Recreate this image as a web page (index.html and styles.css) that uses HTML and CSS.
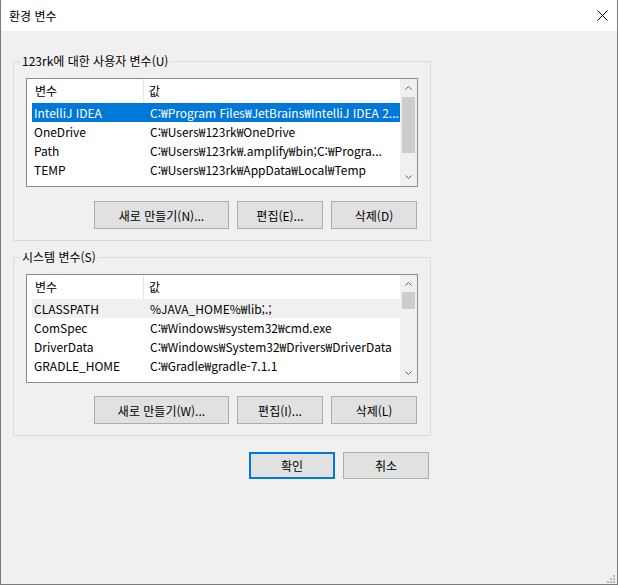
FILE: index.html
```html
<!DOCTYPE html>
<html lang="ko">
<head>
<meta charset="UTF-8">
<title>환경 변수</title>
<link rel="stylesheet" href="styles.css">
</head>
<body>

<div class="window">
    <!-- Title bar -->
    <div class="titlebar">
        <span>환경 변수</span>
        <svg class="close" width="11" height="11" viewBox="0 0 11 11">
            <path d="M0.5 0.5 L10.5 10.5 M10.5 0.5 L0.5 10.5" stroke="#000" stroke-width="1" fill="none"/>
        </svg>
    </div>

    <div class="content">
        <!-- User variables -->
        <fieldset class="group">
            <legend>123rk에 대한 사용자 변수(U)</legend>
            <div class="list">
                <div class="list-body">
                    <div class="list-head">
                        <div class="col-name">변수</div>
                        <div class="col-value">값</div>
                    </div>
                    <div class="rows">
                        <div class="row selected"><span class="name">IntelliJ IDEA</span><span>C:₩Program Files₩JetBrains₩IntelliJ IDEA 2...</span></div>
                        <div class="row"><span class="name">OneDrive</span><span>C:₩Users₩123rk₩OneDrive</span></div>
                        <div class="row"><span class="name">Path</span><span>C:₩Users₩123rk₩.amplify₩bin;C:₩Progra...</span></div>
                        <div class="row"><span class="name">TEMP</span><span>C:₩Users₩123rk₩AppData₩Local₩Temp</span></div>
                    </div>
                </div>
                <div class="scrollbar">
                    <div class="scroll-btn">
                        <svg width="7" height="5" viewBox="0 0 7 5"><polyline points="0.5,4.5 3.5,1.5 6.5,4.5" fill="none" stroke="#606060"/></svg>
                    </div>
                    <div class="track"><div class="thumb" style="margin-top:1px;height:56px"></div></div>
                    <div class="scroll-btn">
                        <svg width="7" height="5" viewBox="0 0 7 5"><polyline points="0.5,0.5 3.5,3.5 6.5,0.5" fill="none" stroke="#606060"/></svg>
                    </div>
                </div>
            </div>
            <div class="list-buttons">
                <button class="btn btn-wide">새로 만들기(N)...</button>
                <button class="btn">편집(E)...</button>
                <button class="btn">삭제(D)</button>
            </div>
        </fieldset>

        <!-- System variables -->
        <fieldset class="group group-system">
            <legend>시스템 변수(S)</legend>
            <div class="list">
                <div class="list-body">
                    <div class="list-head">
                        <div class="col-name">변수</div>
                        <div class="col-value">값</div>
                    </div>
                    <div class="rows">
                        <div class="row inactive"><span class="name">CLASSPATH</span><span>%JAVA_HOME%₩lib;.;</span></div>
                        <div class="row"><span class="name">ComSpec</span><span>C:₩Windows₩system32₩cmd.exe</span></div>
                        <div class="row"><span class="name">DriverData</span><span>C:₩Windows₩System32₩Drivers₩DriverData</span></div>
                        <div class="row"><span class="name">GRADLE_HOME</span><span>C:₩Gradle₩gradle-7.1.1</span></div>
                    </div>
                </div>
                <div class="scrollbar">
                    <div class="scroll-btn">
                        <svg width="7" height="5" viewBox="0 0 7 5"><polyline points="0.5,4.5 3.5,1.5 6.5,4.5" fill="none" stroke="#606060"/></svg>
                    </div>
                    <div class="track"><div class="thumb" style="height:17px"></div></div>
                    <div class="scroll-btn">
                        <svg width="7" height="5" viewBox="0 0 7 5"><polyline points="0.5,0.5 3.5,3.5 6.5,0.5" fill="none" stroke="#606060"/></svg>
                    </div>
                </div>
            </div>
            <div class="list-buttons">
                <button class="btn btn-wide">새로 만들기(W)...</button>
                <button class="btn">편집(I)...</button>
                <button class="btn">삭제(L)</button>
            </div>
        </fieldset>

        <!-- OK / Cancel -->
        <div class="dialog-buttons">
            <button class="btn btn-default">확인</button>
            <button class="btn">취소</button>
        </div>
    </div>

    <!-- Resize grip -->
    <svg class="grip" width="8" height="8" viewBox="0 0 8 8" fill="#b8b8b8">
        <rect x="6" y="0" width="2" height="2"/>
        <rect x="3" y="3" width="2" height="2"/>
        <rect x="6" y="3" width="2" height="2"/>
        <rect x="0" y="6" width="2" height="2"/>
        <rect x="3" y="6" width="2" height="2"/>
        <rect x="6" y="6" width="2" height="2"/>
    </svg>
</div>

</body>
</html>
```

FILE: styles.css
```css
* {
    box-sizing: border-box;
}

body {
    margin: 0;
    font-family: "Noto Sans CJK KR", "Noto Sans", sans-serif;
    font-size: 12px;
    color: #000;
}

.window {
    position: relative;
    width: 618px;
    height: 585px;
    background-color: #f0f0f0;
    border: 1px solid #7a7a7a;
    border-top: none;
}

.titlebar {
    display: flex;
    justify-content: space-between;
    align-items: center;
    height: 31px;
    padding: 0 9px 0 8px;
    background-color: #fff;
}

.content {
    padding: 22px 0 0 12px;
}

.group {
    width: 418px;
    margin: 0;
    padding: 9px 12px 11px;
    border: 1px solid #dcdcdc;
}

.group legend {
    margin-left: -6px;
    padding: 0 2px;
    line-height: 16px;
}

.group + .group {
    margin-top: 8px;
}

.list {
    display: flex;
    height: 109px;
    border: 1px solid #8c8c8c;
    background-color: #fff;
    overflow: hidden;
}

.list-body {
    flex: 1;
    overflow: hidden;
}

.list-head {
    display: flex;
    height: 24px;
    line-height: 24px;
}

.list-head .col-name {
    width: 117px;
    padding-left: 8px;
    border-right: 1px solid #e5e5e5;
}

.list-head .col-value {
    padding-left: 5px;
}

.rows {
    padding-left: 5px;
}

.row {
    display: flex;
    height: 19px;
    line-height: 19px;
    padding-left: 2px;
    white-space: nowrap;
}

.row .name {
    width: 116px;
    flex-shrink: 0;
}

.row.selected {
    background-color: #0078d7;
    color: #fff;
}

.row.inactive {
    background-color: #f0f0f0;
}

.scrollbar {
    display: flex;
    flex-direction: column;
    width: 17px;
    background-color: #f0f0f0;
}

.scroll-btn {
    display: flex;
    justify-content: center;
    align-items: center;
    height: 17px;
}

.track {
    flex: 1;
    padding: 0 2px;
}

.thumb {
    background-color: #cdcdcd;
}

.list-buttons {
    display: flex;
    justify-content: flex-end;
    gap: 8px;
    margin-top: 14px;
    padding-right: 1px;
}

.group-system .list-buttons {
    margin-top: 13px;
}

.btn {
    width: 86px;
    height: 28px;
    padding: 0;
    font: inherit;
    color: #000;
    background-color: #e1e1e1;
    border: 1px solid #adadad;
}

.btn-wide {
    width: 135px;
}

.dialog-buttons {
    display: flex;
    justify-content: flex-end;
    gap: 8px;
    width: 418px;
    margin-top: 16px;
    padding-right: 2px;
}

.dialog-buttons .btn {
    height: 27px;
}

.btn-default {
    border: 2px solid #0078d7;
}

.grip {
    position: absolute;
    right: 2px;
    bottom: 1px;
}
```
